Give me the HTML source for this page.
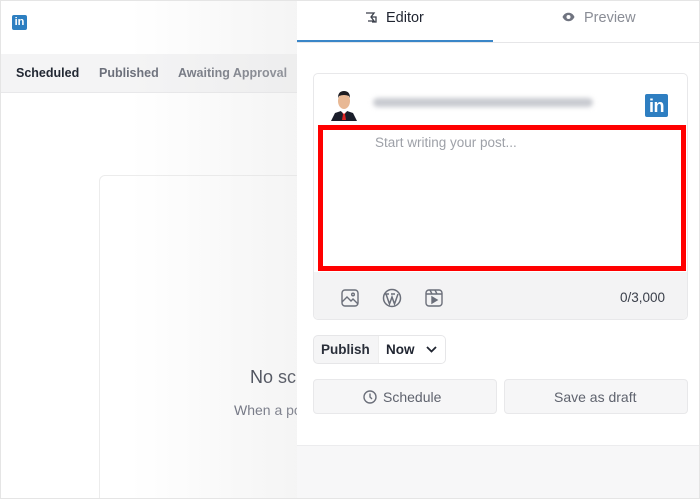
<!DOCTYPE html>
<html><head><meta charset="utf-8"><style>
*{box-sizing:border-box;margin:0;padding:0}
html,body{width:700px;height:499px;overflow:hidden}
body{font-family:"Liberation Sans",sans-serif;background:#fff;position:relative}
.abs{position:absolute}
</style></head><body>
<div class="abs" style="left:12px;top:15px;width:15px;height:15px;background:#2d7fc1;border-radius:2px;color:#fff;font-size:11px;font-weight:bold;line-height:15px;text-align:center">in</div>
<div class="abs" style="left:0;top:54px;width:297px;height:39px;background:#f4f4f5;border-bottom:1px solid #e8e8ea"></div>
<div class="abs" style="left:16px;top:66px;font-size:12.5px;font-weight:bold;color:#222833">Scheduled</div>
<div class="abs" style="left:99px;top:66px;font-size:12.5px;font-weight:bold;color:#6b6f7a">Published</div>
<div class="abs" style="left:178px;top:66px;font-size:12.5px;font-weight:bold;color:#6b6f7a">Awaiting Approval</div>
<div class="abs" style="left:99px;top:175px;width:240px;height:330px;border:1px solid #ececec;border-radius:6px;background:#fff"></div>
<div class="abs" style="left:250px;top:367px;font-size:18px;color:#1c2130">No sc</div>
<div class="abs" style="left:234px;top:402px;font-size:14px;color:#55596a">When a po</div>
<div class="abs" style="left:130px;top:0;width:168px;height:499px;background:linear-gradient(to right,rgba(240,240,240,0),rgba(225,225,225,0.35))"></div>
<div class="abs" style="left:0;top:0;width:700px;height:499px;border:1px solid #e5e5e5;pointer-events:none"></div>
<div class="abs" style="left:297px;top:1px;width:402px;height:497px;background:#fff">
 <div class="abs" style="left:0;top:-1px;width:402px;height:43px;border-bottom:1px solid #e6e6e8"></div>
 <div class="abs" style="left:0;top:39px;width:196px;height:2px;background:#3a86c8"></div>
 <svg class="abs" style="left:68px;top:10px" width="13" height="13" viewBox="0 0 13 13" fill="none" stroke="#3a3f4a" stroke-width="1.3"><path d="M1 2h8l-3 4 3 4H3M6 6h5v5H7"/></svg>
 <div class="abs" style="left:89px;top:9px;font-size:14.5px;color:#1f2430">Editor</div>
 <svg class="abs" style="left:265px;top:11px" width="13" height="10" viewBox="0 0 13 10"><path d="M0.5 5C2 2 4 0.8 6.5 0.8S11 2 12.5 5C11 8 9 9.2 6.5 9.2S2 8 0.5 5z" fill="#707480"/><circle cx="6.5" cy="5" r="2" fill="#fff"/></svg>
 <div class="abs" style="left:287px;top:9px;font-size:14.5px;color:#8a8d96">Preview</div>
 <div class="abs" style="left:16px;top:72px;width:375px;height:247px;border:1px solid #e8e8ea;border-radius:5px;background:#fff;overflow:hidden">
  <div class="abs" style="left:0;top:198px;width:375px;height:49px;background:#f3f3f4"></div>
 </div>
 <svg class="abs" style="left:34px;top:88px" width="26" height="32" viewBox="0 0 26 32"><ellipse cx="13" cy="12" rx="6" ry="8" fill="#e8b894"/><path d="M7 9Q7 2 13 2T19 9L18 7Q13 5 8 7z" fill="#1c1c22"/><path d="M0 32L4 24 10 22 13 26 16 22 22 24 26 32z" fill="#1a1d2a"/><path d="M11 23h4l-1 2 1 6h-4l1-6z" fill="#d22"/><path d="M10 22l3 3 3-3" fill="#fff"/></svg>
 <div class="abs" style="left:76px;top:97px;width:220px;height:9px;background:#c8cad0;border-radius:5px;filter:blur(2.5px)"></div>
 <div class="abs" style="left:348px;top:93px;width:23px;height:23px;background:#2e7ec1;border-radius:2px;color:#fff;font-size:18px;font-weight:bold;line-height:24px;text-align:center;letter-spacing:-0.5px">in</div>
 <div class="abs" style="left:21px;top:124px;width:368px;height:146px;border:5px solid #ff0000;background:#fff"></div>
 <div class="abs" style="left:78px;top:134px;font-size:13.5px;color:#9ea1a8">Start writing your post...</div>
 <svg class="abs" style="left:44px;top:288px" width="18" height="18" viewBox="0 0 18 18" fill="none" stroke="#6b6f7a" stroke-width="1.4"><rect x="1" y="1" width="16" height="16" rx="3"/><path d="M1 13l5-5 4 4 2-2 5 5"/><circle cx="12" cy="5.5" r="1.3"/></svg>
 <svg class="abs" style="left:85px;top:287px" width="20" height="20" viewBox="0 0 20 20" fill="none" stroke="#6b6f7a" stroke-width="1.5"><circle cx="10" cy="10" r="8.5"/><path d="M4 6l3.5 10L10 9l2.5 7L16 6M3 6h4M9 6h4"/></svg>
 <svg class="abs" style="left:128px;top:288px" width="18" height="18" viewBox="0 0 18 18" fill="none" stroke="#6b6f7a" stroke-width="1.4"><rect x="1" y="1" width="16" height="16" rx="3"/><path d="M1 5h16M5 1l2 4M10 1l2 4"/><path d="M7 8v6l5-3z" fill="#6b6f7a"/></svg>
 <div class="abs" style="left:323px;top:289px;font-size:13.5px;color:#3a3f4a">0/3,000</div>
 <div class="abs" style="left:16px;top:334px;width:133px;height:29px;border:1px solid #e6e6e8;border-radius:5px;background:#f5f5f6;overflow:hidden">
  <div class="abs" style="left:64px;top:0;width:69px;height:29px;background:#fff;border-left:1px solid #eee"></div>
 </div>
 <div class="abs" style="left:24px;top:341px;font-size:13.5px;font-weight:bold;color:#2a2f3a">Publish</div>
 <div class="abs" style="left:89px;top:341px;font-size:13.5px;font-weight:bold;color:#1f2430">Now</div>
 <svg class="abs" style="left:129px;top:345px" width="11" height="7" viewBox="0 0 11 7" fill="none" stroke="#1f2430" stroke-width="1.8"><path d="M1 1l4.5 4.5L10 1"/></svg>
 <div class="abs" style="left:16px;top:378px;width:184px;height:35px;border:1px solid #e8e8ea;border-radius:4px;background:#f6f6f7"></div>
 <svg class="abs" style="left:66px;top:389px" width="14" height="14" viewBox="0 0 14 14" fill="none" stroke="#6b6f7a" stroke-width="1.4"><circle cx="7" cy="7" r="6"/><path d="M7 3.5V7l2 2"/></svg>
 <div class="abs" style="left:86px;top:388px;font-size:14px;color:#5f636e">Schedule</div>
 <div class="abs" style="left:207px;top:378px;width:184px;height:35px;border:1px solid #e8e8ea;border-radius:4px;background:#f6f6f7"></div>
 <div class="abs" style="left:257px;top:388px;font-size:14px;color:#5f636e">Save as draft</div>
 <div class="abs" style="left:0;top:444px;width:402px;height:53px;background:#f7f7f8;border-top:1px solid #ececee"></div>
</div>
</body></html>
